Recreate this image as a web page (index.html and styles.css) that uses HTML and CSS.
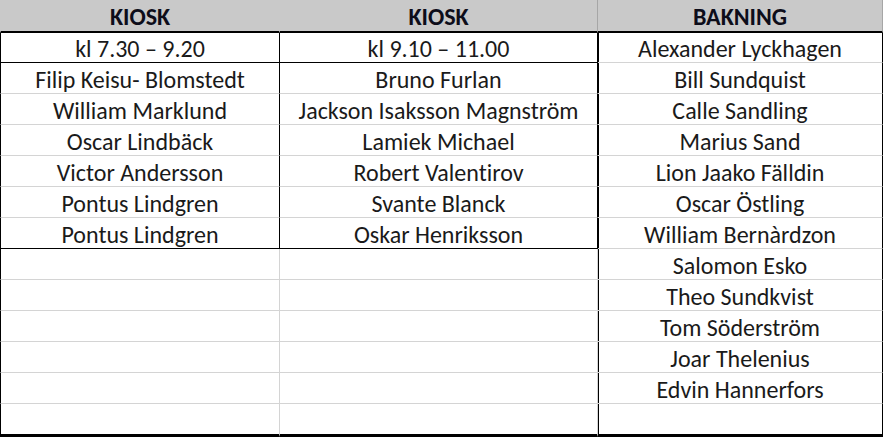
FILE: index.html
```html
<!DOCTYPE html>
<html lang="sv">
<head>
<meta charset="utf-8">
<title>Kiosk och bakning</title>
<link rel="stylesheet" href="styles.css">
</head>
<body>
<div class="sheet">
  <div class="col col-a">
    <div class="cell head">KIOSK</div>
    <div class="cell first box">kl 7.30 – 9.20</div>
    <div class="cell box">Filip Keisu- Blomstedt</div>
    <div class="cell box">William Marklund</div>
    <div class="cell box">Oscar Lindbäck</div>
    <div class="cell box">Victor Andersson</div>
    <div class="cell box">Pontus Lindgren</div>
    <div class="cell box last">Pontus Lindgren</div>
    <div class="cell"></div>
    <div class="cell"></div>
    <div class="cell"></div>
    <div class="cell"></div>
    <div class="cell"></div>
    <div class="cell end"></div>
  </div>
  <div class="col col-b">
    <div class="cell head">KIOSK</div>
    <div class="cell first box">kl 9.10 – 11.00</div>
    <div class="cell box">Bruno Furlan</div>
    <div class="cell box">Jackson Isaksson Magnström</div>
    <div class="cell box">Lamiek Michael</div>
    <div class="cell box">Robert Valentirov</div>
    <div class="cell box">Svante Blanck</div>
    <div class="cell box last">Oskar Henriksson</div>
    <div class="cell"></div>
    <div class="cell"></div>
    <div class="cell"></div>
    <div class="cell"></div>
    <div class="cell"></div>
    <div class="cell end"></div>
  </div>
  <div class="col col-c">
    <div class="cell head">BAKNING</div>
    <div class="cell first">Alexander Lyckhagen</div>
    <div class="cell">Bill Sundquist</div>
    <div class="cell">Calle Sandling</div>
    <div class="cell">Marius Sand</div>
    <div class="cell">Lion Jaako Fälldin</div>
    <div class="cell">Oscar Östling</div>
    <div class="cell">William Bernàrdzon</div>
    <div class="cell">Salomon Esko</div>
    <div class="cell">Theo Sundkvist</div>
    <div class="cell">Tom Söderström</div>
    <div class="cell">Joar Thelenius</div>
    <div class="cell">Edvin Hannerfors</div>
    <div class="cell end"></div>
  </div>
</div>
</body>
</html>
```
FILE: styles.css
```css
html, body {
  margin: 0;
  padding: 0;
  background: #ffffff;
}

.sheet {
  display: flex;
  width: 884px;
  height: 437px;
  overflow: hidden;
  font-family: "Carlito", "Lato", "Liberation Sans", sans-serif;
  font-size: 24px;
  font-variant-ligatures: none;
  font-feature-settings: "liga" 0, "clig" 0;
  color: #1a1a1a;
}

.col {
  display: flex;
  flex-direction: column;
  flex: none;
}

.col-a { width: 280px; }
.col-b { width: 318px; }
.col-c { width: 285px; }

.cell {
  box-sizing: border-box;
  height: 31px;
  display: flex;
  align-items: flex-end;
  justify-content: center;
  padding-bottom: 1px;
  line-height: 24px;
  white-space: nowrap;
  border-bottom: 1px solid #d4d4d4;
  border-right: 1px solid #d4d4d4;
}

.col-a .cell { border-left: 1px solid #000; }

.cell.head {
  height: 33px;
  background: #c9c9c9;
  font-weight: bold;
  color: #0d0d1a;
  padding-bottom: 2px;
  border-bottom: 2px solid #000;
  border-right-color: #a6a6a6;
}

.col-a .cell.head {
  border-left-color: #c9c9c9;
  border-right-color: #c9c9c9;
}

.cell.first { height: 30px; }

.cell.box { border-right-color: #000; }
.cell.first.box { border-bottom-color: #000; }
.cell.last { border-bottom-color: #000; }

.col-c .cell:not(.head) {
  border-right-color: #000;
  box-shadow: inset 1px 0 0 #000;
}

.cell.end {
  border-bottom: 3px solid #000;
  height: 33px;
}
```
